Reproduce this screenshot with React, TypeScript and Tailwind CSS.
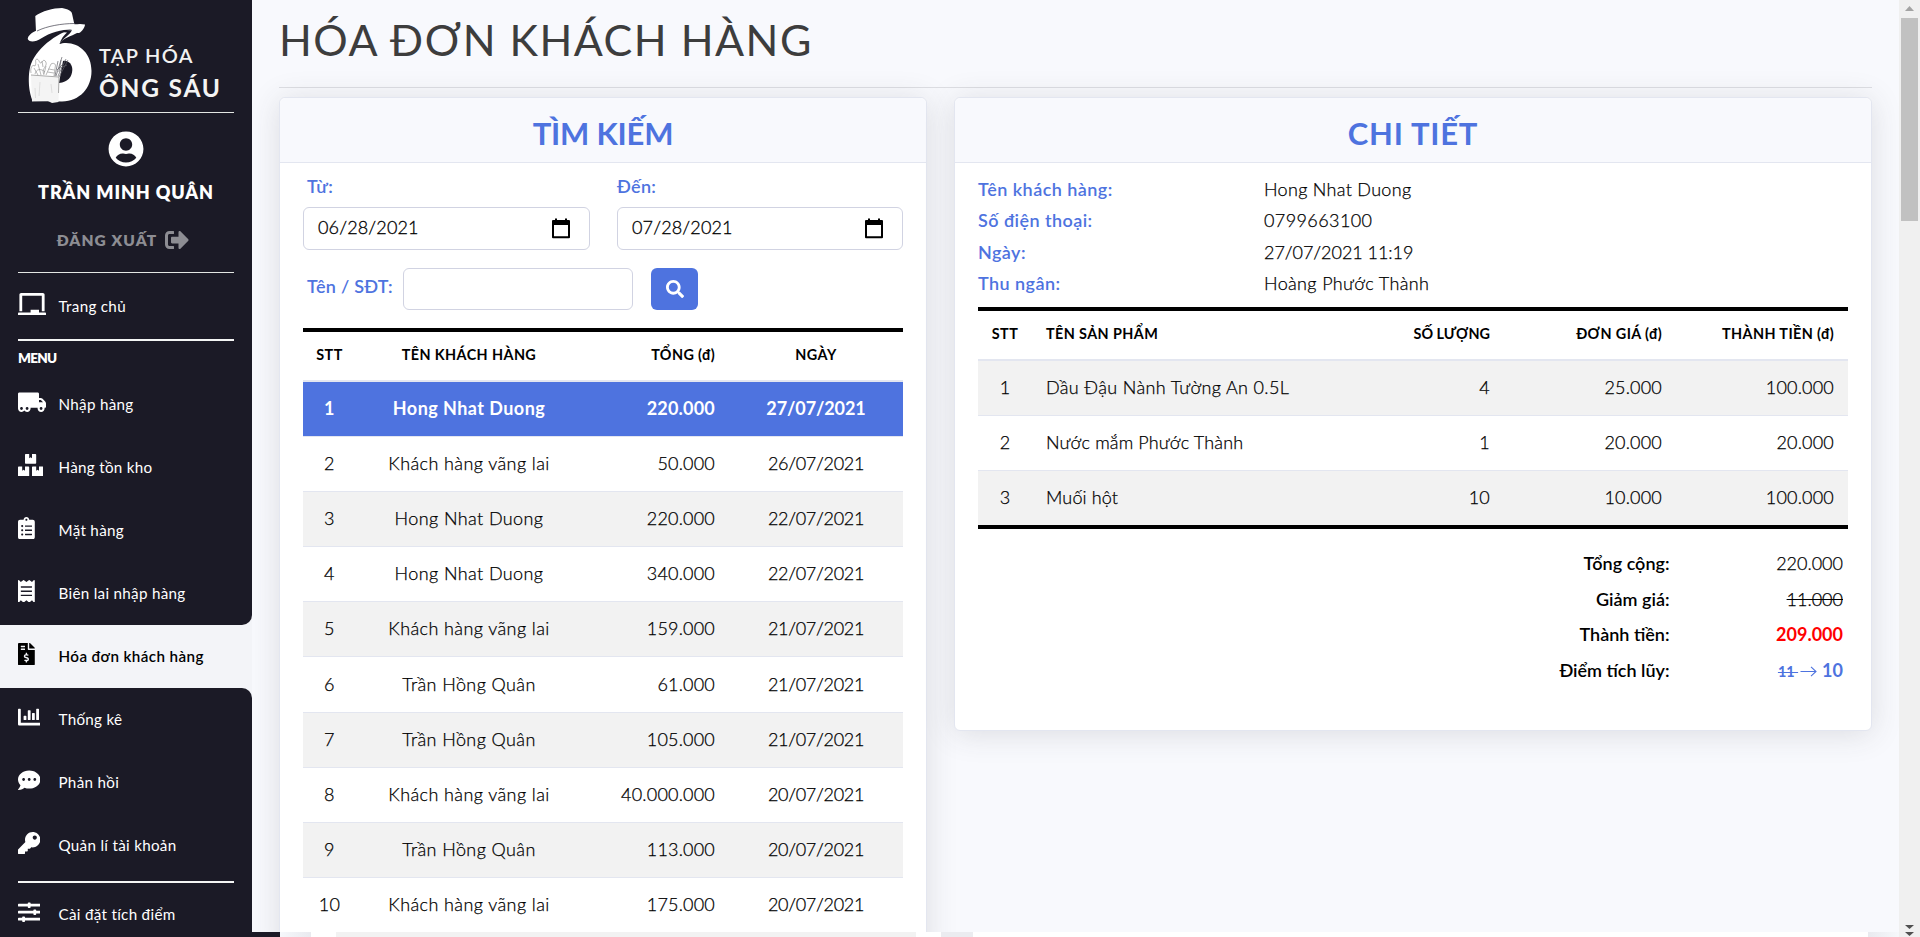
import type { ReactNode } from 'react';
import {
  FaBoxes,
  FaChalkboard,
  FaChartBar,
  FaClipboardList,
  FaCommentDots,
  FaFileInvoiceDollar,
  FaKey,
  FaReceipt,
  FaSearch,
  FaSignOutAlt,
  FaSlidersH,
  FaTruckMoving,
  FaUserCircle,
} from 'react-icons/fa';

const invoices = [
  { name: 'Hong Nhat Duong', total: '220.000', date: '27/07/2021' },
  { name: 'Khách hàng vãng lai', total: '50.000', date: '26/07/2021' },
  { name: 'Hong Nhat Duong', total: '220.000', date: '22/07/2021' },
  { name: 'Hong Nhat Duong', total: '340.000', date: '22/07/2021' },
  { name: 'Khách hàng vãng lai', total: '159.000', date: '21/07/2021' },
  { name: 'Trần Hồng Quân', total: '61.000', date: '21/07/2021' },
  { name: 'Trần Hồng Quân', total: '105.000', date: '21/07/2021' },
  { name: 'Khách hàng vãng lai', total: '40.000.000', date: '20/07/2021' },
  { name: 'Trần Hồng Quân', total: '113.000', date: '20/07/2021' },
  { name: 'Khách hàng vãng lai', total: '175.000', date: '20/07/2021' },
];

const products = [
  { name: 'Dầu Đậu Nành Tường An 0.5L', qty: '4', price: '25.000', total: '100.000' },
  { name: 'Nước mắm Phước Thành', qty: '1', price: '20.000', total: '20.000' },
  { name: 'Muối hột', qty: '10', price: '10.000', total: '100.000' },
];

const info = [
  { label: 'Tên khách hàng:', value: 'Hong Nhat Duong', tracking: 'tracking-[0.3px]' },
  { label: 'Số điện thoại:', value: '0799663100', tracking: 'tracking-[0.4px]' },
  { label: 'Ngày:', value: '27/07/2021 11:19', tracking: 'tracking-[-0.050px]' },
  { label: 'Thu ngân:', value: 'Hoàng Phước Thành', tracking: 'tracking-[0.35px]' },
];

function Logo() {
  return (
    <svg viewBox="24 4 72 102" className="h-[102px] w-[72px] shrink-0" fill="none">
      <path
        d="M77 28C60 31 38 46 31 64C27 76 29 94 33 101L62 101.500C80 101 91.500 88 91.500 71C91.500 54 80 43 66 43C63.500 43 61 43.500 59.500 44C62 38 72 36 77 33Z"
        fill="#fff"
      />
      <path d="M63 61C68 60 72.500 64 72.300 70C72 77 68 82 59 83Z" fill="#1b1a26" />
      <path d="M36 32L35.300 16C42 11 53 8 62 8C68 9 71.500 11 72 13.500L74.500 25Z" fill="#fff" />
      <path
        d="M35.500 31C30 33.500 27 37.500 28 39.500C29.500 42.500 36 42 41 38.500C50 32.500 62 29.500 71 29.500C74 29.800 76 33.500 79 33C82 32 85 27 85 24.500C81 23.500 78 24 74 24.300Z"
        fill="#fff"
      />
      <path d="M37 31C47 26 62 23.500 74.500 23.500" stroke="#55545f" strokeWidth=".8" />
      <path d="M60 32C65 30.500 69 30 72 30.200C69 36 63 38 59.500 44C61 39 64 35 67 32.500Z" fill="#1b1a26" />
      <path d="M31 75L59 77L58.500 102L52 103L48 101L32 101.500Z" fill="#f4f4f4" />
      <path d="M31 75L59 77L58.500 93" stroke="#888" strokeWidth=".7" />
      <g stroke="#8a8a8a" strokeWidth=".6">
        <path d="M31 73C30 68 32 64 35 66C37 62 34 60 37 59C40 60 39 65 42 62C44 58 47 62 46 65C44 69 42 70 44 75" />
        <path d="M35 74C36 69 41 68 45 72M38 64L41 75M34 68L38 75M42 61L43 67M46 66L44 74" />
        <path d="M46 75L51 64C52 63 55 63 55.500 65L54 76M48.500 69L54.500 70M47.500 72L54 73" />
      </g>
      <path
        d="M55 76L58 61M56 76L62 57M58 76L66 59M59 77L68 60M57 70L63 64M60 68L67 65M59 72L61 60"
        stroke="#5f5f66"
        strokeWidth=".7"
      />
      <path d="M40 82L39 96M51 84L52 93M35 88L35.500 98" stroke="#d8d8d8" strokeWidth=".8" />
    </svg>
  );
}

function CalendarIcon() {
  return (
    <svg viewBox="0 0 20 21" className="h-[21px] w-[20px]" fill="none">
      <path d="M2 3h16v16.200H2z" stroke="#000" strokeWidth="2" strokeLinejoin="round" />
      <path d="M2 3h16v4H2zM4 .500h2v3H4zM14 .500h2v3h-2z" fill="#000" />
    </svg>
  );
}

function NavItem({ icon, label, active = false }: { icon: ReactNode; label: string; active?: boolean }) {
  return (
    <a
      className={
        active
          ? 'flex h-[63px] shrink-0 bg-[#f3f4f8] pl-[18px] text-[15.2px] font-semibold tracking-[0.4px] text-black'
          : 'flex h-[63px] shrink-0 pl-[18px] text-[15.2px] tracking-[0.3px] text-white'
      }
    >
      <span className="w-[40.500px] pt-[18px] text-[22.4px]">{icon}</span>
      <span className="pt-[20.500px] leading-[21px]">{label}</span>
    </a>
  );
}

function Sidebar() {
  return (
    <aside className="flex w-[252px] shrink-0 flex-col bg-[#f3f4f8] text-white">
      <div className="flex shrink-0 flex-col rounded-br-[10px] bg-[#1b1a26]">
        <div className="mx-[18px] flex h-[113px] border-b border-[#e3e6e3] pl-[6px] pt-1">
          <Logo />
          <div className="flex flex-col pl-[3px] pt-[40px] whitespace-nowrap">
            <span className="text-[20px] font-semibold leading-[23px] tracking-[1.3px] text-[#f1f1f1]">TẠP HÓA</span>
            <span className="mt-[6px] text-[24.500px] font-bold leading-[30px] tracking-[1.8px] text-[#f4f4f4]">ÔNG SÁU</span>
          </div>
        </div>
        <div className="mx-[18px] flex h-[160px] flex-col items-center border-b border-[#e3e6e3] pt-[18px]">
          <FaUserCircle className="h-[36px] w-[36px]" />
          <span className="mt-[12.500px] text-[18px] font-extrabold leading-[24px] tracking-[0.9px]">TRẦN MINH QUÂN</span>
          <span className="mt-[24px] flex items-center gap-[8px] pr-[6px] text-[15.500px] font-extrabold leading-6 tracking-[1.1px] text-[#8d8d93]">
            ĐĂNG XUẤT
            <FaSignOutAlt className="text-[24px]" />
          </span>
        </div>
        <div className="mt-[2px] h-[64px]">
          <NavItem icon={<FaChalkboard className="w-[28px]" />} label="Trang chủ" />
        </div>
        <div className="mx-[18px] h-[2px] bg-[#f4f5f4]" />
        <div className="h-[32px] pl-[18px] pt-[7px] text-[13.500px] font-extrabold leading-[20px] tracking-[-0.7px]">MENU</div>
        <NavItem icon={<FaTruckMoving className="w-[28px]" />} label="Nhập hàng" />
        <NavItem icon={<FaBoxes className="w-[25.2px]" />} label="Hàng tồn kho" />
        <NavItem icon={<FaClipboardList className="w-[16.8px]" />} label="Mặt hàng" />
        <NavItem icon={<FaReceipt className="w-[16.8px]" />} label="Biên lai nhập hàng" />
      </div>
      <NavItem active icon={<FaFileInvoiceDollar className="w-[16.8px]" />} label="Hóa đơn khách hàng" />
      <div className="flex-1 rounded-tr-[10px] bg-[#1b1a26]">
        <NavItem icon={<FaChartBar />} label="Thống kê" />
        <NavItem icon={<FaCommentDots />} label="Phản hồi" />
        <NavItem icon={<FaKey />} label="Quản lí tài khoản" />
        <div className="mx-[18px] mt-[4px] h-[2px] bg-[#f4f5f4]" />
        <NavItem icon={<FaSlidersH />} label="Cài đặt tích điểm" />
      </div>
    </aside>
  );
}

const card = 'flex flex-col rounded-[6px] border border-[#e3e6f0] bg-white shadow-[0_3px_31px_rgba(58,59,69,0.15)]';

function CardTitle({ children }: { children: ReactNode }) {
  return (
    <h2 className="h-[65px] shrink-0 rounded-t-[6px] border-b border-[#e3e6f0] bg-[#f8f9fd] pt-[13px] text-center text-[31px] font-bold leading-[44px] text-[#4e73df]">
      {children}
    </h2>
  );
}

function DateInput({ value }: { value: string }) {
  return (
    <div className="mt-[11px] flex h-[43px] items-center justify-between rounded-[6px] border border-[#d1d3e2] pl-[14px] pr-[18px] text-[18px] font-light tracking-[0.15px] text-black [-webkit-text-stroke:0.300px_#000]">
      <span className="pb-[3px]">{value}</span>
      <CalendarIcon />
    </div>
  );
}

function InvoiceCard() {
  return (
    <section className={`${card} w-[648px] shrink-0 pb-6`}>
      <CardTitle>
        <span className="tracking-[-0.2px]">TÌM KIẾM</span>
      </CardTitle>
      <div className="flex flex-col px-[23px] pt-[13px]">
        <div className="flex gap-[27px]">
          <div className="w-[287px]">
            <div className="pl-[4px] text-[18px] font-semibold leading-[20px] tracking-[0.4px] text-[#4e73df]">Từ:</div>
            <DateInput value="06/28/2021" />
          </div>
          <div className="w-[286px]">
            <div className="text-[18px] font-semibold leading-[20px] tracking-[0.3px] text-[#4e73df]">Đến:</div>
            <DateInput value="07/28/2021" />
          </div>
        </div>
        <div className="mt-[18px] flex h-[42px]">
          <span className="w-[100px] pl-[4px] text-[18px] font-semibold leading-[36px] tracking-[0.25px] text-[#4e73df]">Tên / SĐT:</span>
          <div className="w-[230px] rounded-[6px] border border-[#d1d3e2]" />
          <button className="ml-[18px] flex w-[47px] items-center justify-center rounded-[6px] bg-[#4e73df] text-white">
            <FaSearch className="text-[18px]" />
          </button>
        </div>
        <div className="mt-[18px] border-t-4 border-black">
          <div className="grid h-[50px] grid-cols-[53px_226px_147px_174px] items-center border-b-2 border-[#e3e6f0] pb-[3px] text-center text-[14.400px] font-bold tracking-[0.4px] text-black">
            <span>STT</span>
            <span>TÊN KHÁCH HÀNG</span>
            <span className="pr-[14px] text-right">TỔNG (đ)</span>
            <span>NGÀY</span>
          </div>
          {invoices.map((r, i) => (
            <div
              key={i}
              className={
                'grid h-[55.100px] grid-cols-[53px_226px_147px_174px] items-center border-b border-[#e3e6f0] pb-[1px] text-center text-[18px] ' +
                (i === 0
                  ? 'bg-[#4e73df] font-bold tracking-[0.450px] text-white'
                  : i % 2 === 0
                    ? 'bg-[#f2f2f2] font-light tracking-[0.4px] text-black [-webkit-text-stroke:0.250px_#000]'
                    : 'font-light tracking-[0.4px] text-black [-webkit-text-stroke:0.250px_#000]')
              }
            >
              <span>{i + 1}</span>
              <span>{r.name}</span>
              <span className="pr-[14px] text-right tracking-[0.2px]">{r.total}</span>
              <span className={i === 0 ? 'tracking-[-0.100px]' : 'tracking-[-0.300px]'}>{r.date}</span>
            </div>
          ))}
        </div>
      </div>
    </section>
  );
}

function TotalRow({ label, children }: { label: string; children: ReactNode }) {
  return (
    <div className="flex h-[35.600px] items-center justify-end pr-[5px] text-[18px]">
      <span className="font-semibold text-black">{label}</span>
      <span className="flex w-[173.500px] items-center justify-end">{children}</span>
    </div>
  );
}

function DetailCard() {
  return (
    <section className={`${card} h-[634px] w-[918px] shrink-0`}>
      <CardTitle>
        <span className="tracking-[0.75px]">CHI TIẾT</span>
      </CardTitle>
      <div className="flex flex-col px-[23px]">
        <div className="h-[144px] pt-[11px] text-[18px] leading-[31.400px]">
          {info.map((row) => (
            <div key={row.label} className="flex">
              <span className="w-[286px] font-semibold tracking-[0.45px] text-[#4e73df]">{row.label}</span>
              <span className={`font-light text-black [-webkit-text-stroke:0.250px_#000] ${row.tracking}`}>{row.value}</span>
            </div>
          ))}
        </div>
        <div className="border-y-4 border-black">
          <div className="grid h-[50px] grid-cols-[54px_330px_142px_172px_172px] items-center border-b-2 border-[#e3e6f0] pb-[3px] text-right text-[14.400px] font-bold tracking-[0.4px] text-black">
            <span className="text-center">STT</span>
            <span className="pl-[14px] text-left">TÊN SẢN PHẨM</span>
            <span className="pr-[14px] tracking-[0px]">SỐ LƯỢNG</span>
            <span className="pr-[14px]">ĐƠN GIÁ (đ)</span>
            <span className="pr-[14px]">THÀNH TIỀN (đ)</span>
          </div>
          {products.map((p, i) => (
            <div
              key={p.name}
              className={
                'grid grid-cols-[54px_330px_142px_172px_172px] items-center pb-[1px] text-right text-[18px] font-light tracking-[0.2px] text-black [-webkit-text-stroke:0.250px_#000] ' +
                (i === 2 ? 'h-[54px] bg-[#f2f2f2]' : i === 0 ? 'h-[55px] border-b border-[#e3e6f0] bg-[#f2f2f2]' : 'h-[55px] border-b border-[#e3e6f0]')
              }
            >
              <span className="text-center">{i + 1}</span>
              <span className={i === 0 ? 'pl-[14px] text-left tracking-[0.35px]' : 'pl-[14px] text-left tracking-[0.150px]'}>{p.name}</span>
              <span className="pr-[14px]">{p.qty}</span>
              <span className="pr-[14px]">{p.price}</span>
              <span className="pr-[14px]">{p.total}</span>
            </div>
          ))}
        </div>
        <div className="mt-[17px]">
          <TotalRow label="Tổng cộng:">
            <span className="font-light text-black [-webkit-text-stroke:0.250px_#000]">220.000</span>
          </TotalRow>
          <TotalRow label="Giảm giá:">
            <span className="font-light text-black line-through [-webkit-text-stroke:0.250px_#000]">11.000</span>
          </TotalRow>
          <TotalRow label="Thành tiền:">
            <span className="font-bold text-[#ff0000]">209.000</span>
          </TotalRow>
          <TotalRow label="Điểm tích lũy:">
            <span className="flex items-baseline font-bold text-[#4e73df]">
              <span className="text-[14.400px] whitespace-pre line-through">11 </span>
              <svg viewBox="0 0 17 11" className="ml-[2px] h-[11px] w-[17px] translate-y-[1px] self-center" fill="none" stroke="#4e73df" strokeWidth="1.100">
                <path d="M0.500 5.500h15.500M11 .800l5 4.700-5 4.700" />
              </svg>
              <span className="pl-[5px]">10</span>
            </span>
          </TotalRow>
        </div>
      </div>
    </section>
  );
}

function Scrollbar() {
  return (
    <div className="flex h-[937px] w-[21px] shrink-0 flex-col items-center bg-[#f0f0f0]">
      <svg viewBox="0 0 9 5" className="mt-[6px] h-[5px] w-[9px]" fill="#a3a3a3">
        <path d="M4.500 0L9 5H0z" />
      </svg>
      <div className="mt-[7px] h-[203px] w-[17px] bg-[#c1c1c1]" />
      <svg viewBox="0 0 9 5" className="mt-auto h-[4px] w-[9px]" preserveAspectRatio="none" fill="#505050">
        <path d="M0 0h9L4.500 5z" />
      </svg>
      <svg viewBox="0 0 9 5" className="mt-[3px] mb-[1px] h-[4px] w-[9px]" preserveAspectRatio="none" fill="#505050">
        <path d="M0 0h9L4.500 5z" />
      </svg>
    </div>
  );
}

export default function App() {
  return (
    <div className="flex h-[937px] w-[1920px] overflow-hidden bg-white font-['Lato','Noto_Sans',sans-serif]">
      <div className="flex w-[1899px] flex-col">
        <div className="flex h-[932px] overflow-hidden">
          <Sidebar />
          <main className="flex flex-1 flex-col overflow-hidden bg-[#f8f9fd] pl-[27px]">
            <h1 className="h-[87px] shrink-0 pt-[11px] text-[43px] leading-[58px] tracking-[1.500px] text-[#3d3d3d]">HÓA ĐƠN KHÁCH HÀNG</h1>
            <div className="h-[1px] w-[1593px] shrink-0 bg-[#dddee3]" />
            <div className="mt-[9px] flex shrink-0 items-start gap-[27px]">
              <InvoiceCard />
              <DetailCard />
            </div>
          </main>
        </div>
        <div className="flex h-[5px]">
          <div className="w-[280px] bg-[#1b1a26]" />
          <div className="w-[31px] bg-linear-to-r from-[#f6f8fb] to-[#e9eaef]" />
          <div className="w-[25px] bg-white" />
          <div className="w-[580px] bg-[#f2f2f2]" />
          <div className="w-[25px] bg-white" />
          <div className="w-[32px] bg-[#ebecf0]" />
          <div className="w-[895px] bg-white" />
          <div className="w-[31px] bg-linear-to-r from-[#e9eaef] to-[#f6f8fb]" />
        </div>
      </div>
      <Scrollbar />
    </div>
  );
}
